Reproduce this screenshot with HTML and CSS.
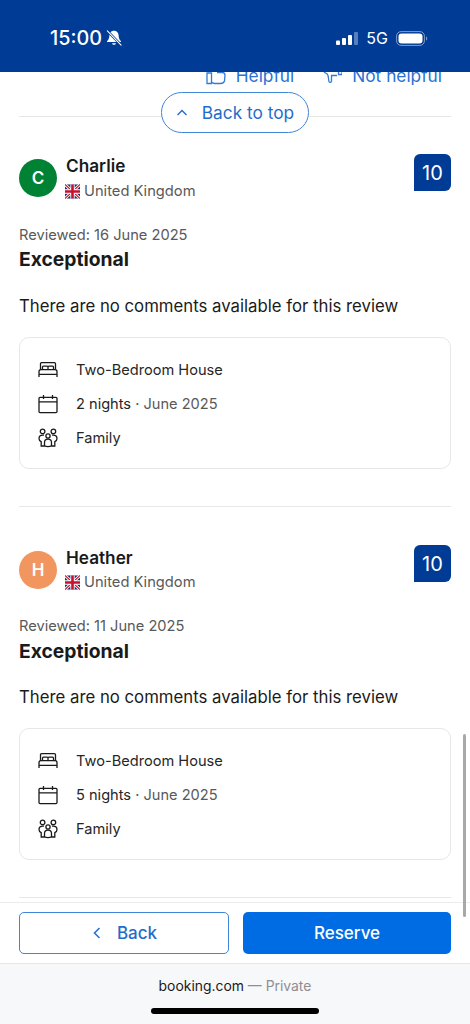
FILE: index.html
```html
<!DOCTYPE html>
<html lang="en">
<head>
<meta charset="utf-8">
<title>Guest reviews</title>
<link rel="stylesheet" href="styles.css">
</head>
<body>
<svg class="defs" width="0" height="0" aria-hidden="true">
  <defs>
    <symbol id="flag" viewBox="0 0 16 16">
      <rect width="16" height="15" y=".5" fill="#1f2f6e"/>
      <path d="M0 .5l16 15M16 .5L0 15.500" stroke="#fff" stroke-width="3"/>
      <path d="M0 .5l16 15M16 .5L0 15.500" stroke="#c8102e" stroke-width="1.100"/>
      <path d="M8 .5v15M0 8h16" stroke="#fff" stroke-width="4.600"/>
      <path d="M8 .5v15M0 8h16" stroke="#c8102e" stroke-width="2.800"/>
    </symbol>
    <symbol id="bed" viewBox="0 0 20 20">
      <path d="M2.500 9.500V3.800c0-.7.5-1.200 1.200-1.200h12.600c.7 0 1.200.5 1.200 1.200v5.700M1 17v-5.200c0-1.200.8-2.200 1.800-2.200h14.400c1 0 1.800 1 1.800 2.200V17M1 14.400h18M4.500 9.500V7c0-.5.4-.9.9-.9h3.700c.5 0 .9.400.9.900v2.500M10 9.500V7c0-.5.4-.9.900-.9h3.700c.5 0 .9.400.9.900v2.500" fill="none" stroke="#1a1a1a" stroke-width="1.300"/>
    </symbol>
    <symbol id="cal" viewBox="0 0 20 20">
      <path d="M2 3.400h16c.5 0 1 .5 1 1v13.200c0 .5-.5 1-1 1H2c-.5 0-1-.5-1-1V4.400c0-.5.500-1 1-1zM1 7.800h18M5.500 1v4M14.500 1v4" fill="none" stroke="#1a1a1a" stroke-width="1.300"/>
    </symbol>
    <symbol id="family" viewBox="0 0 20 20">
      <g fill="none" stroke="#1a1a1a" stroke-width="1.300">
        <circle cx="4.600" cy="3.400" r="2.300"/>
        <circle cx="15.400" cy="3.400" r="2.300"/>
        <circle cx="10" cy="8" r="2.100"/>
        <path d="M6 7.200C2.500 6.500 1 8.500 1 10.500c0 1.700.8 2.600 2.200 3.200V18h3.300M14 7.200c3.500-.7 5 1.300 5 3.300 0 1.700-.8 2.600-2.200 3.200V18h-3.300M6.500 17.800v-3.300c0-2.200 1.500-3.400 3.500-3.400s3.500 1.200 3.500 3.400v3.300c-2.300 1-4.700 1-7 0z"/>
      </g>
    </symbol>
  </defs>
</svg>

<div class="phone">
  <header class="status">
    <div class="status-left">
      <span class="clock">15:00</span>
      <svg class="bell" viewBox="0 0 18 18" aria-hidden="true">
        <path d="M9 .8c-3.300 0-5.200 2.500-5.200 5.500 0 3.200-1 4.600-2.500 6.200-.4.500 0 1.100.6 1.100h14.200c.6 0 1-.6.6-1.100-1.500-1.600-2.500-3-2.500-6.200 0-3-1.900-5.500-5.200-5.500z" fill="#fff"/>
        <path d="M6.800 14.800h4.400c-.3 1.200-1.100 1.900-2.200 1.900s-1.900-.7-2.200-1.900z" fill="#fff"/>
        <path d="M2 1.500L16.500 16.500" stroke="#003b95" stroke-width="2.800"/>
        <path d="M1.500 1L17 17" stroke="#fff" stroke-width="1.200" stroke-linecap="round"/>
      </svg>
    </div>
    <div class="status-right">
      <svg class="signal" viewBox="0 0 23 13" aria-hidden="true">
        <rect x="0" y="8.500" width="4" height="4.500" rx="1" fill="#fff"/>
        <rect x="6" y="6" width="4" height="7" rx="1" fill="#fff"/>
        <rect x="12" y="3" width="4" height="10" rx="1" fill="#fff"/>
        <rect x="18" y="0" width="4" height="13" rx="1" fill="#fff" opacity=".35"/>
      </svg>
      <span class="net">5G</span>
      <svg class="battery" viewBox="0 0 32 15" aria-hidden="true">
        <rect x=".6" y=".6" width="27.800" height="13.800" rx="4.500" fill="none" stroke="#fff" stroke-opacity=".5" stroke-width="1"/>
        <rect x="2.500" y="2.500" width="24" height="10" rx="3" fill="#fff"/>
        <path d="M30 5.500c.9.300 1.200 1.100 1.200 2s-.3 1.700-1.200 2z" fill="#fff" fill-opacity=".5"/>
      </svg>
    </div>
  </header>

  <main class="content">
    <div class="helpful-row">
      <span class="vote">
        <svg class="vote-icon" viewBox="0 0 20 20" aria-hidden="true"><path d="M1 7h4.500v10.500H1zM5.500 16c1 .8 2 1.500 3 1.500h6c2.500 0 3.500-1 4-2.500l.5-6c0-1.500-1-2.500-2.500-2.500H11" fill="none" stroke="#2f7bd6" stroke-width="1.300"/></svg>
        Helpful
      </span>
      <span class="vote">
        <svg class="vote-icon" viewBox="0 0 20 20" aria-hidden="true"><path d="M1 2c0 3 1 4.500 3.500 5.500S6 12 7 15.500c.5 1.200 2.500 1 2.500-.5V9.500h5.500M16.500 2v6.500H20V2" fill="none" stroke="#2f7bd6" stroke-width="1.300"/></svg>
        Not helpful
      </span>
    </div>

    <div class="divider top-divider"></div>

    <article class="review">
      <div class="review-head">
        <div class="avatar avatar-green">C</div>
        <div class="who">
          <div class="name">Charlie</div>
          <div class="country"><svg class="flag"><use href="#flag"/></svg>United Kingdom</div>
        </div>
        <div class="score">10</div>
      </div>
      <div class="date">Reviewed: 16 June 2025</div>
      <h2 class="title">Exceptional</h2>
      <p class="comment">There are no comments available for this review</p>
      <ul class="stay">
        <li><svg class="stay-icon"><use href="#bed"/></svg><span>Two-Bedroom House</span></li>
        <li><svg class="stay-icon"><use href="#cal"/></svg><span>2 nights <i class="muted">· June 2025</i></span></li>
        <li><svg class="stay-icon"><use href="#family"/></svg><span>Family</span></li>
      </ul>
    </article>

    <div class="divider"></div>

    <article class="review review-next">
      <div class="review-head">
        <div class="avatar avatar-orange">H</div>
        <div class="who">
          <div class="name">Heather</div>
          <div class="country"><svg class="flag"><use href="#flag"/></svg>United Kingdom</div>
        </div>
        <div class="score">10</div>
      </div>
      <div class="date">Reviewed: 11 June 2025</div>
      <h2 class="title">Exceptional</h2>
      <p class="comment">There are no comments available for this review</p>
      <ul class="stay">
        <li><svg class="stay-icon"><use href="#bed"/></svg><span>Two-Bedroom House</span></li>
        <li><svg class="stay-icon"><use href="#cal"/></svg><span>5 nights <i class="muted">· June 2025</i></span></li>
        <li><svg class="stay-icon"><use href="#family"/></svg><span>Family</span></li>
      </ul>
    </article>

    <div class="divider"></div>

    <a class="back-top">
      <svg class="chev" viewBox="0 0 12 12" aria-hidden="true"><path d="M1.500 8L6 3.500 10.500 8" fill="none" stroke="#2a72d0" stroke-width="1.500"/></svg>
      Back to top
    </a>
  </main>

  <div class="scrollbar"></div>

  <footer class="actions">
    <a class="btn btn-outline">
      <svg class="chev-left" viewBox="0 0 12 14" aria-hidden="true"><path d="M8.500 2L3.500 7l5 5" fill="none" stroke="#2a72d0" stroke-width="1.600"/></svg>
      Back
    </a>
    <a class="btn btn-solid">Reserve</a>
  </footer>

  <div class="safari">
    <div class="url"><span class="host">booking.com</span> <span class="private">— Private</span></div>
    <div class="home"></div>
  </div>
</div>
</body>
</html>
```

FILE: styles.css
```css
* { box-sizing: border-box; }
html, body { margin: 0; padding: 0; background: #fff; }
body { font-family: Inter, "Liberation Sans", sans-serif; color: #1a1a1a; }
.defs { position: absolute; }
.phone { width: 470px; height: 1024px; display: flex; flex-direction: column; overflow: hidden; position: relative; }

.status { height: 72px; flex: none; background: #003b95; display: flex; justify-content: space-between; align-items: center; padding: 4px 42px 0 50px; color: #fff; position: relative; z-index: 2; }
.status-left { display: flex; align-items: center; gap: 4px; }
.clock { font-size: 19.800px; font-weight: 500; }
.bell { width: 16px; height: 16px; }
.status-right { display: flex; align-items: center; }
.signal { width: 23px; height: 13px; margin-right: 7px; }
.net { font-size: 16px; font-weight: 400; margin-right: 8px; }
.battery { width: 32px; height: 15px; }

.content { flex: 1; min-height: 0; position: relative; overflow: hidden; padding: 0 19px; }
.helpful-row { height: 13px; display: flex; justify-content: flex-end; align-items: flex-end; gap: 28px; padding-right: 9px; overflow: hidden; color: #2a72d0; font-size: 17.300px; line-height: 18px; }
.vote { display: flex; align-items: center; gap: 10px; flex: none; margin-bottom: -1px; }
.vote-icon { width: 20px; height: 20px; flex: none; }

.divider { height: 1px; background: #e7e7e7; }
.top-divider { margin-top: 31px; }

.back-top { position: absolute; left: 161px; top: 20px; width: 148px; height: 41px; border: 1px solid #3f86d8; border-radius: 21px; background: #fff; display: flex; align-items: center; justify-content: center; gap: 14px; color: #1f6dcb; font-size: 17.300px; }
.chev { width: 12px; height: 12px; flex: none; }

.review { height: 389px; padding-top: 37px; display: flex; flex-direction: column; }
.review-next { height: 390px; padding-top: 38px; }
.review-head { display: flex; height: 48px; }
.avatar { width: 38px; height: 38px; margin-top: 5px; border-radius: 50%; color: #fff; font-size: 17px; font-weight: 600; display: flex; align-items: center; justify-content: center; flex: none; }
.avatar-green { background: #008234; }
.avatar-orange { background: #f0965e; margin-top: 6px; }
.who { margin-left: 9px; flex: 1; }
.name { font-size: 17.200px; font-weight: 600; line-height: 24px; }
.country { display: flex; align-items: center; gap: 4px; font-size: 14.700px; color: #595959; line-height: 24px; margin-top: 1px; margin-left: -1px; }
.flag { width: 15px; height: 15px; flex: none; }
.score { width: 37px; height: 37px; background: #003b95; color: #fff; border-radius: 6px 6px 6px 0; font-size: 20px; display: flex; align-items: center; justify-content: center; flex: none; }
.review-next .name { margin-top: 1px; }
.review-next .country { margin-top: 0; }

.date { margin-top: 23px; font-size: 14.650px; line-height: 20px; color: #595959; }
.title { margin: 0; font-size: 19.300px; font-weight: 700; line-height: 28px; }
.comment { margin: 21px 0 0; font-size: 16.750px; line-height: 24px; }
.review-next .title { margin-top: 1px; }
.review-next .comment { margin-top: 20px; }

.stay { list-style: none; margin: 19px 0 0; padding: 20px 18px 12px; border: 1px solid #e7e7e7; border-radius: 10px; height: 132px; display: flex; flex-direction: column; gap: 10px; }
.stay li { display: flex; align-items: center; gap: 18px; height: 24px; font-size: 14.600px; color: #262626; }
.stay-icon { width: 20px; height: 20px; flex: none; }
.muted { font-style: normal; color: #595959; }

.scrollbar { position: absolute; left: 463px; top: 734px; width: 3px; height: 183px; border-radius: 2px; background: #a8a8a8; z-index: 3; }

.actions { height: 62px; flex: none; background: #fff; border-top: 1px solid #ececec; border-bottom: 1px solid #e7e7e7; padding: 9px 19px 0; display: flex; gap: 14px; position: relative; }
.btn { height: 42px; flex: 1 1 0; min-width: 0; border-radius: 5px; display: flex; align-items: center; justify-content: center; font-size: 17px; font-weight: 500; }
.btn-outline { border: 1.500px solid #3f86d8; color: #1f6dcb; gap: 14px; }
.btn-solid { background: #006ce4; color: #fff; }
.chev-left { width: 12px; height: 14px; flex: none; }

.safari { height: 60px; flex: none; background: #f7f8fa; position: relative; display: flex; flex-direction: column; align-items: center; }
.url { margin-top: 13px; font-size: 13.900px; line-height: 18px; }
.host { color: #1a1a1a; }
.private { color: #8e8e93; }
.home { margin-top: 13px; width: 168px; height: 6px; border-radius: 3px; background: #000; }
```
